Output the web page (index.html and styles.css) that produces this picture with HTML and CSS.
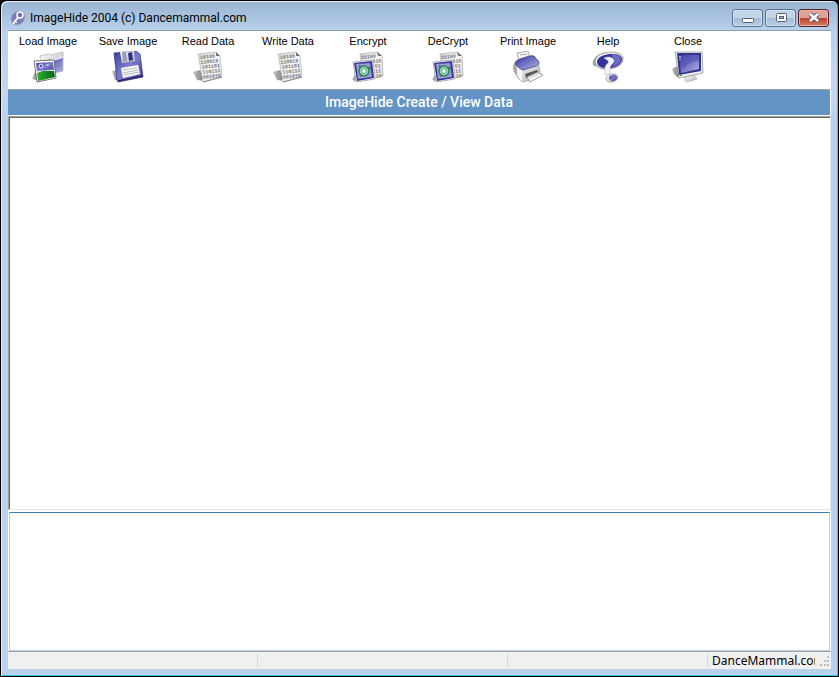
FILE: index.html
```
<!DOCTYPE html>
<html lang="en">
<head>
  <meta charset="UTF-8">
  <meta name="viewport" content="width=device-width, initial-scale=1.0">
  <title>ImageHide 2004</title>
  <link rel="stylesheet" href="styles.css">
</head>
<body>
  <!-- shared icon shapes -->
  <svg class="defs" width="0" height="0" aria-hidden="true">
    <defs>
      <linearGradient id="blue" x1="0" y1="0" x2="1" y2="1">
        <stop offset="0" stop-color="#3c3c98"/>
        <stop offset=".5" stop-color="#7c7cce"/>
        <stop offset="1" stop-color="#34348c"/>
      </linearGradient>
      <linearGradient id="screen" x1="0" y1="0" x2="1" y2="1">
        <stop offset="0" stop-color="#34349c"/>
        <stop offset="1" stop-color="#b4b4ee"/>
      </linearGradient>
      <linearGradient id="metal" x1="0" y1="0" x2="1" y2="1">
        <stop offset="0" stop-color="#ffffff"/>
        <stop offset="1" stop-color="#b0b0b0"/>
      </linearGradient>
      <linearGradient id="paper" x1="0" y1="0" x2="1" y2="1">
        <stop offset="0" stop-color="#d4d4d4"/>
        <stop offset=".5" stop-color="#f6f6f6"/>
        <stop offset="1" stop-color="#dedede"/>
      </linearGradient>
      <linearGradient id="shade" x1="0" y1="0" x2="1" y2="0">
        <stop offset="0" stop-color="#c4c4c4"/>
        <stop offset="1" stop-color="#727272"/>
      </linearGradient>
      <linearGradient id="grass" x1="0" y1="0" x2="1" y2="0">
        <stop offset="0" stop-color="#30b030"/>
        <stop offset="1" stop-color="#006414"/>
      </linearGradient>
      <symbol id="page" viewBox="0 0 32 32">
        <path d="M1 21l7-2 5 11-8-1z" fill="url(#shade)"/>
        <path d="M6 3l18-2 4 4 2 21-19 5z" fill="url(#paper)" stroke="#b0b0b0" stroke-width=".7"/>
        <path d="M30 26l-19 5" stroke="#888" stroke-width="1"/>
        <path d="M24 1l0 4 4 0z" fill="#777"/>
        <g class="bits" transform="rotate(-6 8 8)">
          <text x="8" y="8">10100</text>
          <text x="8" y="13">110010</text>
          <text x="9" y="18">101101</text>
          <text x="9" y="23">110111</text>
          <text x="9" y="28">001010</text>
        </g>
      </symbol>
      <symbol id="crypt" viewBox="0 0 32 32">
        <path d="M8 3l18-2 4 4 1 20-19 4z" fill="url(#paper)" stroke="#aaa" stroke-width=".7"/>
        <path d="M25 1l1 4 4 0z" fill="#777"/>
        <g class="bits" transform="rotate(-5 8 8)">
          <text x="9" y="8">10100</text>
          <text x="20" y="13">010</text>
          <text x="22" y="18">01</text>
          <text x="22" y="23">11</text>
          <text x="22" y="28">10</text>
        </g>
        <path d="M0 29l3-6 3 8z" fill="url(#shade)"/>
        <path d="M1 11l20-2 2 19-19 3z" fill="#f8f8f8" stroke="#888" stroke-width=".6"/>
        <path d="M2 12l18-2 2 17-17 3z" fill="#34349c"/>
        <path d="M4 13l14-1 2 14-14 2z" fill="#9a9ad8"/>
        <circle cx="12" cy="20" r="5" fill="#a8d4c8" stroke="#2c8454" stroke-width="1.500"/>
        <path d="M7 14l3 1-3 2zM17 15l-1 3 3 0zM7 24l3-1-1 3z" fill="#148438"/>
        <circle cx="12" cy="20" r="2.500" fill="#e8fff0" stroke="#46b464" stroke-width="1"/>
      </symbol>
    </defs>
  </svg>

  <div class="window">
    <header class="titlebar">
      <svg class="app-icon" viewBox="0 0 16 16" aria-hidden="true">
        <path d="M8 1a6 6 0 0 1 7 5c0 5-4 9-9 9a6 6 0 0 1-5-5c0-5 3-8 7-9z" fill="#7c7cba" stroke="#a4a4cc"/>
        <path d="M3 14L10 5" stroke="#fff" stroke-width="2"/>
        <path d="M5 11l2 2" stroke="#fff"/>
        <circle cx="10" cy="5" r="3" fill="#7070b0" stroke="#fff" stroke-width="1.500"/>
      </svg>
      <h1 class="title">ImageHide 2004 (c) Dancemammal.com</h1>
      <div class="controls">
        <button type="button" class="control" aria-label="Minimize">
          <svg viewBox="0 0 14 12"><rect x="1.500" y="6.500" width="11" height="4" rx="1" fill="#fff" stroke="#535d70"/></svg>
        </button>
        <button type="button" class="control" aria-label="Maximize">
          <svg viewBox="0 0 14 12"><rect x="2.500" y="1.500" width="10" height="8" rx="1" fill="#fff" stroke="#535d70"/><rect x="5.500" y="4.500" width="4" height="2" fill="#a4bcd8" stroke="#535d70"/></svg>
        </button>
        <button type="button" class="control control-close" aria-label="Close window">
          <svg viewBox="0 0 14 12"><path d="M3 2l8 7M11 2l-8 7" stroke="#535d70" stroke-width="4.500"/><path d="M3 2l8 7M11 2l-8 7" stroke="#fff" stroke-width="2.500"/></svg>
        </button>
      </div>
    </header>

    <main class="client">
      <nav class="toolbar">
        <button type="button" class="tool">
          <span>Load Image</span>
          <svg class="icon" viewBox="0 0 32 32">
            <path d="M0 28l4-10 3 12z" fill="url(#shade)"/>
            <path d="M8 5l9-2 2 1 12-3 0 19-21 5z" fill="url(#metal)" stroke="#aaa" stroke-width=".7"/>
            <path d="M10 10l21-4-1 14-12 3z" fill="url(#screen)"/>
            <path d="M13 10l18-5v2l-17 5z" fill="#e4e4fa"/>
            <path d="M2 10l20-1 2 18-19 4z" fill="#fff" stroke="#555" stroke-width=".8"/>
            <path d="M4 12l17-1 1 9-17 1z" fill="url(#blue)"/>
            <path d="M5 22c7-3 10-2 17-2l1 6-17 4z" fill="url(#grass)"/>
            <path d="M5 20c6 0 10-2 17-1v1c-8 0-11-1-17 2z" fill="#eef4ff"/>
            <circle cx="9" cy="15" r="2.500" fill="#c8c8ee"/>
            <circle cx="9" cy="15" r="1.200" fill="#50509c"/>
            <path d="M13 14l4-1-1 2z" fill="#ddddf4"/>
          </svg>
        </button>
        <button type="button" class="tool">
          <span>Save Image</span>
          <svg class="icon" viewBox="0 0 32 32">
            <path d="M0 20l5-1 3 11-5-1z" fill="url(#shade)"/>
            <path d="M2 2l22-2 4 3 3 23-25 5-1-2z" fill="url(#blue)" stroke="#303080" stroke-width=".7"/>
            <path d="M6 30l25-5" stroke="#26266c" stroke-width="1.500"/>
            <path d="M8 1l14-1 1 10-13 2z" fill="url(#metal)"/>
            <path d="M10 1l4 0 1 9-4 1z" fill="#9c9cb4"/>
            <path d="M16 2l4-1 1 8-4 1z" fill="#30308c"/>
            <path d="M9 17l17-3 2 9-17 4z" fill="#fafafa" stroke="#ccc" stroke-width=".5"/>
            <path d="M11 19l14-2M11 22l15-3M12 24l15-3" stroke="#999" stroke-width=".7"/>
          </svg>
        </button>
        <button type="button" class="tool">
          <span>Read Data</span>
          <svg class="icon"><use href="#page"/></svg>
        </button>
        <button type="button" class="tool">
          <span>Write Data</span>
          <svg class="icon"><use href="#page"/></svg>
        </button>
        <button type="button" class="tool">
          <span>Encrypt</span>
          <svg class="icon"><use href="#crypt"/></svg>
        </button>
        <button type="button" class="tool">
          <span>DeCrypt</span>
          <svg class="icon"><use href="#crypt"/></svg>
        </button>
        <button type="button" class="tool">
          <span>Print Image</span>
          <svg class="icon" viewBox="0 0 32 32">
            <path d="M1 16c0-4 3-6 6-5l1 16c-4-2-7-6-7-11z" fill="#aaa"/>
            <path d="M5 2l11-2 2 7-11 3z" fill="#f4f4f4" stroke="#999" stroke-width=".8"/>
            <path d="M8 4l7-1" stroke="#999" stroke-width=".8"/>
            <path d="M4 14l22-4 2 11-9 8-9 2-5-5z" fill="url(#metal)" stroke="#999" stroke-width=".7"/>
            <path d="M5 16l5 3v12l-4-5z" fill="#f6f6f6"/>
            <path d="M3 12c1-3 5-4 8-5 4-1 7-3 11-2l5 6c0 2-1 3-3 4l-13 4c-3-1-7-4-8-7z" fill="url(#screen)" stroke="#444484" stroke-width=".8"/>
            <path d="M13 23l12-4 2 3-13 5z" fill="#555"/>
            <path d="M15 26l11-5 5 3-13 7z" fill="#fafafa" stroke="#888" stroke-width=".8"/>
            <path d="M17 27l11-5" stroke="#aaa" stroke-width=".7"/>
          </svg>
        </button>
        <button type="button" class="tool">
          <span>Help</span>
          <svg class="icon" viewBox="0 0 32 32">
            <path d="M1 14c-2-6 5-12 14-13l-6 13c-3 2-6 2-8 0z" fill="#a8a8a8"/>
            <path d="M3 10c1-6 9-9 16-9 8 0 13 3 12 8-1 6-9 9-16 9-5 1-11-1-12-8z" fill="url(#metal)" stroke="#909090" stroke-width=".7"/>
            <path d="M5 10c2-5 8-7 15-7 7 0 11 3 10 6-1 5-7 8-13 8-6 1-12-1-12-7z" fill="#34349c"/>
            <path d="M19 4c6-1 11 2 10 5-1 4-5 6-9 7 3-4 4-7-1-12z" fill="#6c6cc4"/>
            <path d="M12 7c4-2 9-1 10 2 1 3-4 5-4 8l0 6-5 1c0-6-1-8 2-11 2-2 2-3 0-4z" fill="#f4f4f8" stroke="#b8b8c4" stroke-width=".6"/>
            <ellipse cx="20" cy="27" rx="6" ry="4" fill="url(#metal)" stroke="#999" stroke-width=".7" transform="rotate(-15 20 27)"/>
            <ellipse cx="21" cy="27" rx="4" ry="3" fill="url(#blue)" transform="rotate(-15 21 27)"/>
          </svg>
        </button>
        <button type="button" class="tool">
          <span>Close</span>
          <svg class="icon" viewBox="0 0 32 32">
            <path d="M0 18l5-3 3 12c-4-1-7-4-8-9z" fill="url(#shade)"/>
            <path d="M13 26l9-2 3 4-10 3-2-1z" fill="url(#metal)" stroke="#aaa" stroke-width=".7"/>
            <path d="M3 1l27 0 1 21-24 5z" fill="#eee" stroke="#999" stroke-width=".8"/>
            <path d="M5 2l24 0 0 18-22 4z" fill="#34348e"/>
            <path d="M7 4l20 0 0 14-18 4z" fill="url(#screen)"/>
            <path d="M9 5l18-1v6c-8 0-12 3-17 8z" fill="#5454b4" opacity=".6"/>
            <path d="M8 5v2M8 8v1" stroke="#fff"/>
            <circle cx="9" cy="24" r="1" fill="#20a030"/>
          </svg>
        </button>
      </nav>
      <h2 class="banner">ImageHide Create / View Data</h2>
      <div class="viewer"></div>
      <textarea class="message" aria-label="Hidden data"></textarea>
      <footer class="statusbar">
        <div class="panel"></div>
        <div class="panel"></div>
        <div class="panel panel-small"></div>
        <div class="site">DanceMammal.com</div>
        <svg class="grip" viewBox="0 0 12 12" aria-hidden="true">
          <path d="M8 1h2v2h-2zM5 5h2v2h-2zM8 5h2v2h-2zM1 9h2v2h-2zM5 9h2v2h-2zM8 9h2v2h-2z" fill="#bdbdbd"/>
        </svg>
      </footer>
    </main>
  </div>
</body>
</html>
```
FILE: styles.css
```
* {
  box-sizing: border-box;
  margin: 0;
  padding: 0;
}

body {
  font-family: "Noto Sans", "Segoe UI", Tahoma, sans-serif;
  font-size: 12px;
  background: #000;
  color: #000;
}

.defs {
  position: absolute;
}

.window {
  display: flex;
  flex-direction: column;
  height: 100vh;
  border: 1px solid #000;
  border-radius: 7px 7px 0 0;
  padding: 0 7px;
  padding-bottom: 7px;
  background: linear-gradient(#98b4d2, #b9d1ea 30px, #c4d8ec 90px, #b9d1ea 120px);
  box-shadow: inset 1px 1px #e4eef8, inset -1px -1px #35c4dc;
}

.titlebar {
  display: flex;
  align-items: center;
  height: 30px;
  padding: 5px 2px 0 2px;
  border-bottom: 1px solid #8f9eae;
}

.app-icon {
  width: 16px;
  height: 16px;
  margin-right: 4px;
}

.title {
  flex: 1;
  font-family: Roboto, "Segoe UI", sans-serif;
  font-size: 12px;
  font-weight: normal;
  line-height: 16px;
}

.controls {
  display: flex;
  gap: 2px;
}

.control {
  display: flex;
  justify-content: center;
  align-items: center;
  width: 31px;
  height: 18px;
  border: 1px solid #59718f;
  border-radius: 3px;
  background: linear-gradient(#c4d5e8 50%, #a4bbd6 50%, #b8cfe8);
  box-shadow: inset 0 0 0 1px #d4e2f2;
}

.control svg {
  width: 14px;
  height: 12px;
}

.control-close {
  border-color: #56202c;
  background: linear-gradient(#e0a296 50%, #bd3e27 50%, #d08060);
  box-shadow: inset 0 0 0 1px #e6b2a6;
}

.client {
  flex: 1;
  display: flex;
  flex-direction: column;
  min-height: 0;
  background: #fff;
}

.toolbar {
  display: flex;
  height: 58px;
}

.tool {
  display: flex;
  flex-direction: column;
  align-items: center;
  gap: 3px;
  width: 80px;
  padding-top: 4px;
  border: none;
  background: none;
  font-family: "Liberation Sans", Arial, sans-serif;
  font-size: 11px;
  line-height: 13px;
  white-space: nowrap;
}

.icon {
  width: 32px;
  height: 32px;
}

.bits {
  font-family: "Liberation Mono", monospace;
  font-size: 5px;
  font-weight: bold;
  fill: #777;
}

.banner {
  height: 27px;
  margin-right: 1px;
  border-top: 1px solid #a0a0a0;
  border-bottom: 1px solid #fff;
  background: #6394c5;
  color: #fff;
  font-family: Roboto, "Trebuchet MS", sans-serif;
  font-size: 14px;
  font-weight: 500;
  line-height: 25px;
  text-align: center;
}

.viewer {
  flex: 1;
  border: 1px solid #a0a0a0;
  border-right-color: #e3e3e3;
  border-bottom-color: #e3e3e3;
  box-shadow: inset 1px 1px #696969;
}

.message {
  display: block;
  height: 139px;
  margin: 2px 1px 0 1px;
  padding: 2px;
  border: 1px solid #b5cfe7;
  border-top-color: #3d7bad;
  outline: none;
  resize: none;
  background: #fff;
  font: inherit;
}

.statusbar {
  display: flex;
  align-items: center;
  height: 18px;
  border-top: 1px solid #a0a0a0;
  background: #f0f0f0;
}

.panel {
  width: 250px;
  height: 14px;
  border-right: 1px solid #d7d7d7;
}

.panel-small {
  width: 200px;
}

.site {
  flex: 1;
  overflow: hidden;
  margin: 0 4px;
  line-height: 17px;
}

.grip {
  width: 12px;
  height: 12px;
}
```
